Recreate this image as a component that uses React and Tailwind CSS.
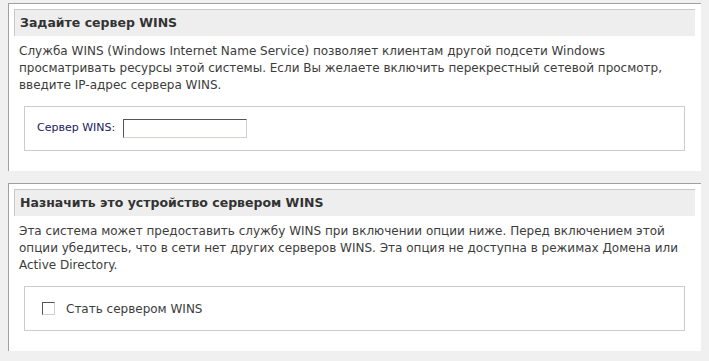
const font = { fontFamily: '"DejaVu Sans", Verdana, sans-serif' };

function Section({ title, children, box }) {
  return (
    <div className="bg-white border-l border-t border-[#a0a0a0] pt-[5px] pl-[5px] pr-[6px] pb-[20px]">
      <div className="h-[27px] bg-[#eeeeee] border-l border-t border-[#c8c8c8] pl-[5px] flex items-center">
        <h2 className="text-[12.5px] font-bold text-[#333333]">{title}</h2>
      </div>
      <p className="text-[12px] leading-[17px] text-[#3c3c3c] pl-[5px] pt-[7px]">{children}</p>
      <div className="mt-[12px] mx-[10px] h-[45px] border border-[#cccccc] flex items-center pl-[12px]">{box}</div>
    </div>
  );
}

export default function App() {
  return (
    <div className="min-h-screen bg-[#f0f0f0] pt-[3px] pl-[8px] pr-[8px] flex flex-col gap-[12px]" style={font}>
      <Section
        title="Задайте сервер WINS"
        box={
          <label className="flex items-center gap-[8px] text-[11px] text-[#202060]">
            Сервер WINS:
            <input
              type="text"
              className="w-[124px] h-[19px] bg-white border border-t-[#555555] border-l-[#555555] border-b-[#d4d0c8] border-r-[#d4d0c8] outline-none"
            />
          </label>
        }
      >
        Служба WINS (Windows Internet Name Service) позволяет клиентам другой подсети Windows
        <br />
        просматривать ресурсы этой системы. Если Вы желаете включить перекрестный сетевой просмотр,
        <br />
        введите IP-адрес сервера WINS.
      </Section>
      <Section
        title="Назначить это устройство сервером WINS"
        box={
          <label className="flex items-center gap-[11px] text-[12px] text-[#3c3c3c] pl-[5px]">
            <span className="w-[13px] h-[13px] bg-white border border-t-[#555555] border-l-[#555555] border-b-[#d4d0c8] border-r-[#d4d0c8]" />
            Стать сервером WINS
          </label>
        }
      >
        Эта система может предоставить службу WINS при включении опции ниже. Перед включением этой
        <br />
        опции убедитесь, что в сети нет других серверов WINS. Эта опция не доступна в режимах Домена или
        <br />
        Active Directory.
      </Section>
    </div>
  );
}
